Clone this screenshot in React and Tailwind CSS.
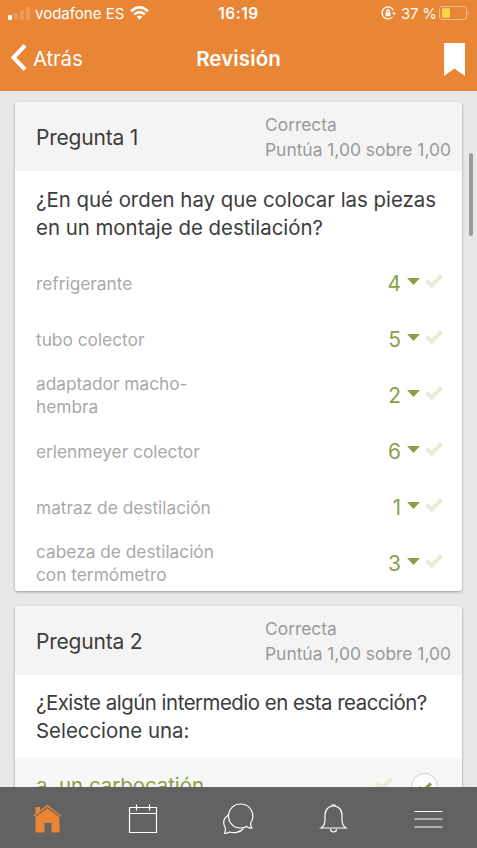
const matches = [
  { label: "refrigerante", value: "4" },
  { label: "tubo colector", value: "5" },
  { label: "adaptador macho-hembra", value: "2" },
  { label: "erlenmeyer colector", value: "6" },
  { label: "matraz de destilación", value: "1" },
  { label: "cabeza de destilación con termómetro", value: "3" },
];

function Check({ className }) {
  return (
    <svg viewBox="0 0 18 14" className={className} fill="none" stroke="currentColor" strokeWidth="4.2">
      <path d="M1.4 6.6 L6.7 11.4 L16.6 1.6" />
    </svg>
  );
}

function StatusBar() {
  return (
    <div className="relative flex h-7 items-center justify-between pl-2 pr-[7px] text-white">
      <div className="flex items-center">
        <svg className="mb-0.5 h-[13px] w-[22px]" viewBox="0 0 22 13" fill="#fff">
          <rect x="0" y="8" width="4" height="5" rx="1" />
          <rect x="6" y="6" width="4" height="7" rx="1" opacity=".18" />
          <rect x="12" y="3" width="4" height="10" rx="1" opacity=".18" />
          <rect x="18" y="0" width="4" height="13" rx="1" opacity=".18" />
        </svg>
        <span className="ml-[5px] w-[89px] whitespace-nowrap text-[15px]">vodafone ES</span>
        <svg className="mb-0.5 ml-[6px] h-[14px] w-[19px]" viewBox="0 0 19 14" fill="none" stroke="#fff" strokeWidth="2.5">
          <path d="M1 5.2 Q9.5 -2.5 18 5.2" />
          <path d="M4.2 8.5 Q9.5 3.8 14.8 8.5" />
          <path d="M6.7 10.6 Q9.5 8.4 12.3 10.6 L9.5 13.7 Z" fill="#fff" stroke="none" />
        </svg>
      </div>
      <span className="absolute left-1/2 -translate-x-1/2 text-[15.5px] font-semibold tracking-[0.5px]">16:19</span>
      <div className="flex items-center">
        <svg className="mb-0.5 h-[14px] w-[15px]" viewBox="0 0 15 14" fill="none" stroke="#fff" strokeWidth="1.3">
          <path d="M12.4 4.2 A6 6 0 1 0 11.6 10.8" />
          <path d="M11 6.4 H15 L13 9 Z" fill="#fff" stroke="none" />
          <rect x="4.6" y="6.2" width="4.8" height="4" fill="#fff" stroke="none" />
          <path d="M5.6 6.4 V5 Q7 3 8.4 5 V6.4" />
        </svg>
        <span className="ml-[5px] w-[37px] whitespace-nowrap text-[15px] tracking-[-0.2px]">37 %</span>
        <svg className="mb-0.5 ml-[1px] h-[14px] w-[31px]" viewBox="0 0 31 14">
          <rect x=".5" y=".5" width="27" height="13" rx="2.5" fill="none" stroke="#f3bd8d" />
          <rect x="3" y="2.2" width="8" height="9.6" rx="1" fill="#f8d548" />
          <path d="M29 5 Q31 7 29 9 Z" fill="#f3bd8d" />
        </svg>
      </div>
    </div>
  );
}

function Header() {
  return (
    <header className="h-[91px] shrink-0 bg-[#e88635] text-white">
      <StatusBar />
      <div className="relative flex h-[62px] items-center justify-between pl-[10px] pr-3">
        <div className="flex items-center">
          <svg className="mt-[-4px] h-[27px] w-[17px]" viewBox="0 0 17 27" fill="none" stroke="#fff" strokeWidth="4">
            <path d="M15 1.5 L3.5 13.5 L15 25.5" />
          </svg>
          <span className="ml-[6px] text-[20.5px] tracking-[-0.2px]">Atrás</span>
        </div>
        <h1 className="absolute left-1/2 -translate-x-1/2 text-[20.5px] font-semibold tracking-[0.1px]">Revisión</h1>
        <svg className="h-[33px] w-[21px]" viewBox="0 0 21 33" fill="#fff">
          <path d="M0 0 H21 V33 L10.5 25.5 L0 33 Z" />
        </svg>
      </div>
    </header>
  );
}

function QuestionCard({ number, children }) {
  return (
    <section className="shrink-0 overflow-hidden rounded-[3px] bg-white shadow-[0_1px_3px_rgba(0,0,0,0.35)]">
      <div className="flex h-[69px] items-center bg-[#f4f4f4] pl-[21px]">
        <h2 className="mt-[3px] w-[229px] text-[21px] tracking-[-0.2px] text-[#3c3c3c]">Pregunta {number}</h2>
        <p className="whitespace-nowrap pt-px text-[17.4px] leading-[25px] text-[#999]">
          Correcta
          <br />
          Puntúa 1,00 sobre 1,00
        </p>
      </div>
      {children}
    </section>
  );
}

function MatchRow({ label, value }) {
  return (
    <div className="flex h-14 items-center justify-between pl-[21px] pr-[19px]">
      <span className="w-[190px] text-[17.3px] leading-[23px] text-[#a9a9a9]">{label}</span>
      <div className="flex items-center text-[#88a04a]">
        <span className="mt-0.5 text-[21px]">{value}</span>
        <svg className="mb-1 ml-[6px] h-[7px] w-[13px]" viewBox="0 0 13 7" fill="currentColor">
          <path d="M0 0 H13 L6.5 7 Z" />
        </svg>
        <Check className="mb-1 ml-[5px] h-[14px] w-[18px] text-[#e6ebda]" />
      </div>
    </div>
  );
}

function TabBar() {
  return (
    <nav className="flex h-[61px] shrink-0 items-center justify-around bg-[#626262] pr-0.5 pt-[3px] text-white">
      <svg className="h-8 w-8" viewBox="0 0 32 32">
        <path d="M3.5 4 H8 V8 L15.5 3.500 L27.5 13.500 V29.5 H19.5 V20 H12.5 V29.5 H3.5 Z" fill="#e88635" />
        <path d="M1.5 14.500 L15.300 4.500 L29 14.500" fill="none" stroke="#626262" strokeWidth="1.2" />
        <path d="M1.5 13.200 L15.300 2.700 L29 13.200" fill="none" stroke="#e88635" strokeWidth="1.4" />
      </svg>
      <svg className="h-8 w-8" viewBox="0 0 32 32" fill="none" stroke="currentColor" strokeWidth="1.2">
        <path d="M2.5 4.5 H29.5 V29.5 H2.5 Z M2.5 10.5 H29.5 M9.5 1.5 V7.5 M22.5 1.5 V7.5" />
      </svg>
      <svg className="h-8 w-8" viewBox="0 0 32 32" fill="none" stroke="currentColor" strokeWidth="1.2">
        <path d="M28.5 20.500 C34 12 29 1 18.500 1 C11.500 1 6.500 6.500 6.500 13 C6.500 20 12 25 18.500 25 Q22 25 24.500 23.500 Q27 25.600 30 25 Q28.500 23.500 28.500 20.500" />
        <path d="M6.500 12 C1.500 15 .5 20 3.500 25.500 Q3.500 28.500 2.500 30.500 Q5.500 30.500 7.500 29 C12 30.500 18 29.500 21.500 25.500" />
      </svg>
      <svg className="h-8 w-8" viewBox="0 0 32 32" fill="none" stroke="currentColor" strokeWidth="1.2">
        <path d="M4 25 Q8 22.500 8 17 V12 C8 0 25 0 25 12 V17 Q25 22.500 29 25 Z" />
        <path d="M15 3 V2 H18 V3 M13.500 26 C13.500 30 19.500 30 19.500 26" />
      </svg>
      <svg className="h-8 w-8" viewBox="0 0 32 32" fill="none" stroke="currentColor" strokeWidth="1.2">
        <path d="M2.500 8.500 H30.500 M2.500 16 H30.500 M2.500 24 H30.500" />
      </svg>
    </nav>
  );
}

export default function App() {
  return (
    <div className="relative flex h-[848px] w-[477px] flex-col overflow-hidden bg-[#e8e8e8] font-['Inter',sans-serif]">
      <Header />
      <main className="flex min-h-0 flex-1 flex-col gap-[15px] overflow-hidden px-[15px] pt-[11px]">
        <QuestionCard number={1}>
          <p className="h-[84px] whitespace-nowrap pl-[21px] pt-[15px] text-[20.4px] leading-[28px] text-[#3c3c3c]">
            ¿En qué orden hay que colocar las piezas
            <br />
            en un montaje de destilación?
          </p>
          {matches.map((m) => (
            <MatchRow key={m.value} label={m.label} value={m.value} />
          ))}
        </QuestionCard>
        <QuestionCard number={2}>
          <p className="h-[83px] whitespace-nowrap pl-[21px] pt-[14px] text-[20.4px] leading-[28px] text-[#3c3c3c]">
            <span className="tracking-[-0.48px]">¿Existe algún intermedio en esta reacción?</span>
            <br />
            Seleccione una:
          </p>
          <div className="flex h-[56px] items-center bg-[#f7f7f5] pl-[21px] pr-[24px] text-[#88a04a]">
            <span className="flex-1 text-[20.4px]">a. un carbocatión</span>
            <Check className="mb-1 h-[14px] w-[18px] text-[#e6ebda]" />
            <div className="ml-[18px] flex h-[27px] w-[27px] items-center justify-center rounded-full border border-[#ccc] bg-white">
              <Check className="mt-[3px] h-[11px] w-[14px]" />
            </div>
          </div>
        </QuestionCard>
      </main>
      <div className="absolute right-1 top-[153px] h-[83px] w-[4px] rounded-full bg-[#9b9b9b]" />
      <TabBar />
    </div>
  );
}
